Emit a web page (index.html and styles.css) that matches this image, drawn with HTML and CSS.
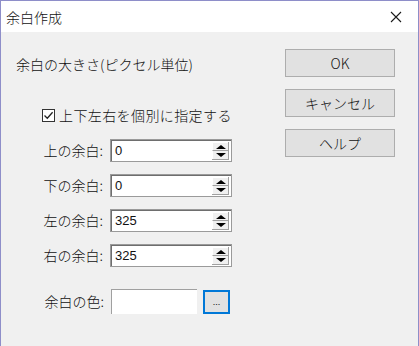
FILE: index.html
```html
<!DOCTYPE html>
<html lang="ja">
<head>
  <meta charset="UTF-8">
  <meta name="viewport" content="width=device-width, initial-scale=1.0">
  <title>余白作成</title>
  <link rel="stylesheet" href="styles.css">
</head>
<body>
  <div class="window">
    <!-- タイトルバー -->
    <div class="titlebar">
      <span class="title">余白作成</span>
      <svg class="close" width="12" height="12" viewBox="0 0 12 12">
        <path d="M1 1 L11 11 M11 1 L1 11" stroke="#1a1a1a" stroke-width="1.1" fill="none"/>
      </svg>
    </div>

    <div class="content">
      <!-- 左側 -->
      <div class="left">
        <div class="heading">余白の大きさ(ピクセル単位)</div>

        <label class="check-row">
          <span class="checkbox">
            <svg width="11" height="11" viewBox="0 0 11 11">
              <path d="M1.5 5.5 L4.3 8.3 L9.6 2.2" stroke="#222" stroke-width="1.3" fill="none"/>
            </svg>
          </span>
          上下左右を個別に指定する
        </label>

        <div class="form">
          <span class="label">上の余白:</span>
          <div class="field"><span class="value">0</span><span class="spin"><span class="up"></span><span class="down"></span></span></div>

          <span class="label">下の余白:</span>
          <div class="field"><span class="value">0</span><span class="spin"><span class="up"></span><span class="down"></span></span></div>

          <span class="label">左の余白:</span>
          <div class="field"><span class="value">325</span><span class="spin"><span class="up"></span><span class="down"></span></span></div>

          <span class="label">右の余白:</span>
          <div class="field"><span class="value">325</span><span class="spin"><span class="up"></span><span class="down"></span></span></div>
        </div>

        <div class="color-row">
          <span class="label">余白の色:</span>
          <span class="swatch"></span>
          <button class="pick">...</button>
        </div>
      </div>

      <!-- 右側のボタン -->
      <div class="right">
        <button class="btn">OK</button>
        <button class="btn">キャンセル</button>
        <button class="btn">ヘルプ</button>
      </div>
    </div>
  </div>
</body>
</html>
```

FILE: styles.css
```css
body {
  margin: 0;
  font-family: "Noto Sans CJK JP", "Noto Sans", sans-serif;
  font-size: 14px;
  font-weight: 300;
  color: #111;
  background-color: #f0f0f0;
}
.window {
  height: 346px;
  border: 1px solid #8e8ec9;
  border-bottom: none;
  box-sizing: border-box;
  background-color: #f0f0f0;
}
/* タイトルバー */
.titlebar {
  height: 31px;
  background-color: #fff;
  display: flex;
  align-items: center;
  justify-content: space-between;
  padding: 0 16px 0 5px;
}
.title {
  line-height: 20px;
}
.close {
  display: block;
}
.content {
  display: grid;
  grid-template-columns: 284px 110px;
}
.left {
  padding-left: 15px;
}
.heading {
  margin-top: 22px;
  line-height: 20px;
}
/* チェックボックス */
.check-row {
  display: flex;
  align-items: center;
  margin-top: 31px;
  margin-left: 26px;
  line-height: 20px;
  gap: 4px;
  letter-spacing: 0.4px;
}
.checkbox {
  width: 11px;
  height: 11px;
  border: 1px solid #333;
  background-color: #fff;
  display: flex;
}
/* 余白の入力欄 */
.form {
  display: grid;
  grid-template-columns: 94px 122px;
  row-gap: 12px;
  margin-top: 14px;
}
.label {
  text-align: right;
  padding-right: 7px;
  line-height: 23px;
}
.field {
  height: 23px;
  box-sizing: border-box;
  border: 1px solid #9a9a9a;
  box-shadow: inset 1px 1px 0 #6e6e6e;
  background-color: #fff;
  display: flex;
  align-items: center;
  justify-content: space-between;
  padding: 1px 2px 1px 4px;
}
.value {
  font-family: "Liberation Sans", Arial, sans-serif;
  font-size: 13px;
  font-weight: 400;
  line-height: 15px;
}
.spin {
  width: 17px;
  height: 18px;
  display: flex;
  flex-direction: column;
  background-color: #f0f0f0;
  border-right: 1px solid #a0a0a0;
  border-bottom: 1px solid #a0a0a0;
  box-sizing: border-box;
}
.up, .down {
  flex: 1;
  position: relative;
  border-top: 1px solid #fff;
  border-left: 1px solid #fff;
}
.down {
  border-top: 1px solid #a0a0a0;
}
.up::after, .down::after {
  content: "";
  position: absolute;
  left: 3px;
  top: 2px;
  border-left: 5px solid transparent;
  border-right: 5px solid transparent;
}
.up::after {
  border-bottom: 4px solid #000;
}
.down::after {
  border-top: 4px solid #000;
  top: 2px;
}
/* 余白の色 */
.color-row {
  display: flex;
  align-items: center;
  margin-top: 22px;
}
.color-row .label {
  width: 95px;
  box-sizing: border-box;
  line-height: 25px;
}
.swatch {
  width: 86px;
  height: 25px;
  box-sizing: border-box;
  background-color: #fff;
  border-top: 1px solid #a0a0a0;
  border-left: 1px solid #a0a0a0;
}
.pick {
  width: 27px;
  height: 24px;
  margin-left: 6px;
  border: 2px solid #0078d7;
  background-color: #e1e1e1;
  box-shadow: inset 0 0 0 1px #e1e1e1;
  font-size: 9px;
  font-family: "Liberation Sans", Arial, sans-serif;
  padding: 0;
  color: #000;
}
/* 右側のボタン */
.right {
  display: flex;
  flex-direction: column;
  gap: 12px;
  padding-top: 17px;
}
.btn {
  width: 110px;
  height: 28px;
  border: 1px solid #adadad;
  background-color: #e1e1e1;
  font-family: "Noto Sans CJK JP", "Noto Sans", sans-serif;
  font-size: 14px;
  font-weight: 300;
  color: #111;
  padding: 0;
}
```
